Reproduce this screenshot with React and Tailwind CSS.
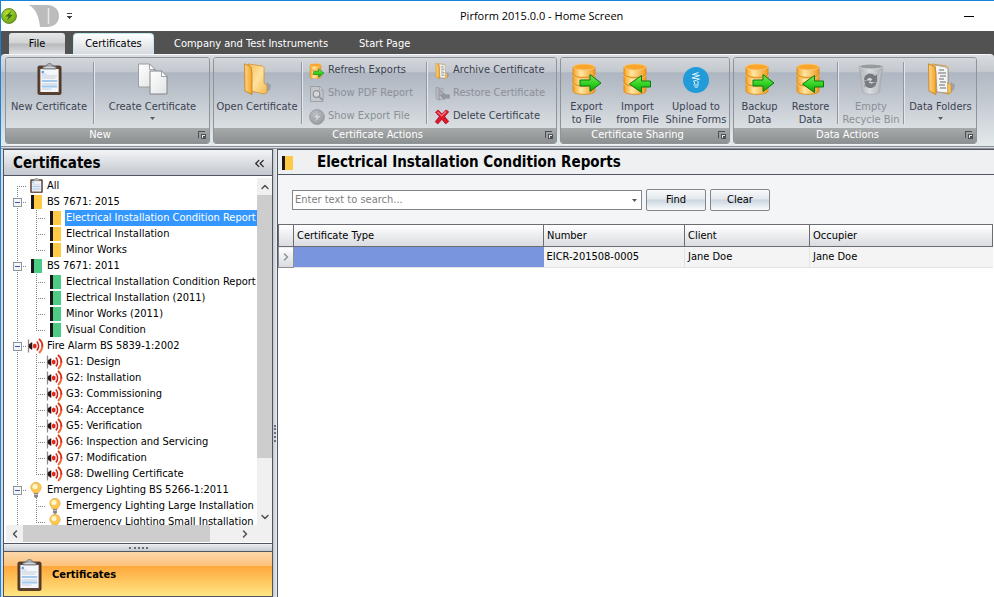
import React, { useState } from "react";
import { ChevronUp, ChevronDown, ChevronLeft, ChevronRight, ChevronsLeft } from "lucide-react";

/* ---------- icons ---------- */

const Bolt = ({ size = 16, grey }) => (
  <svg width={size} height={size} viewBox="0 0 16 16">
    <defs>
      <radialGradient id={grey ? "boltGrey" : "boltGreen"} cx="0.4" cy="0.3" r="0.8">
        <stop offset="0" stopColor={grey ? "#b9bcc0" : "#b6e22c"} />
        <stop offset="1" stopColor={grey ? "#86898d" : "#5fa014"} />
      </radialGradient>
    </defs>
    <circle cx="8" cy="8" r="7.4" fill={grey ? "url(#boltGrey)" : "url(#boltGreen)"} stroke={grey ? "#8d9094" : "#667f2a"} strokeWidth="1" />
    <path d="M11 2 3.800 8.800h3.500L5 14l7.500-7.500H8.900z" fill={grey ? "#d5d8db" : "#3c6a12"} stroke={grey ? "#7d8084" : "#a6d43e"} strokeWidth="0.400" />
  </svg>
);

const Clipboard = ({ small }) => (
  <svg width={small ? 13 : 25} height={small ? 15 : 32} viewBox="0 0 26 32" preserveAspectRatio="none" className="shrink-0">
    <rect x="1" y="3" width="24" height="28.500" rx="1.500" fill="#5f402c" stroke="#3a2a22" strokeWidth="0.800" />
    <path d="M3.500 6h19v23h-19z" fill="#f3f7fc" />
    <path d="M5 11h5M5 13h16M5 15h14M5 21h16M5 26h10" stroke="#b9c3d2" strokeWidth="0.800" />
    <path d="M5 18h16M5 23.500h16" stroke="#a4c8ec" strokeWidth="2" />
    <circle cx="6" cy="9" r="1.300" fill="#5a9be0" />
    <path d="M6 6V3.800l4-.8C10.300 1 11.500.4 13 .4s2.700.6 3 2.600l4 .8V6z" fill="#a7abb0" stroke="#5d6065" strokeWidth="0.700" />
    <path d="M8 4.300h10" stroke="#e6e8ea" strokeWidth="0.900" />
  </svg>
);

const Pages = () => (
  <svg width="32" height="32" viewBox="0 0 32 32">
    <defs>
      <linearGradient id="pageFill" x1="0" y1="0" x2="1" y2="1">
        <stop offset="0" stopColor="#ffffff" />
        <stop offset="1" stopColor="#e2e3e4" />
      </linearGradient>
    </defs>
    <path d="M1.500 1h11l5.500 5.500V24H1.500z" fill="url(#pageFill)" stroke="#9b9da0" />
    <path d="M12.500 1v5.500H18z" fill="#fff" stroke="#8b8e92" strokeWidth="0.800" />
    <path d="M13 8h11.500L30 13.500V31H13z" fill="url(#pageFill)" stroke="#828487" />
    <path d="M24.500 8v5.500H30z" fill="#fff" stroke="#8b8e92" strokeWidth="0.800" />
  </svg>
);

const Folder = ({ size = 32, papers, grey }) => {
  const id = grey ? "folderGrey" : "folderGold";
  return (
    <svg width={size} height={size} viewBox="0 0 32 32">
      <defs>
        <linearGradient id={id} x1="0" y1="0" x2="1" y2="1">
          <stop offset="0" stopColor={grey ? "#b6b9bd" : "#f9bd55"} />
          <stop offset="0.500" stopColor={grey ? "#d3d5d8" : "#ffe3a0"} />
          <stop offset="1" stopColor={grey ? "#a4a7ab" : "#f5b84e"} />
        </linearGradient>
        <linearGradient id={`${id}Flap`}>
          <stop offset="0" stopColor={grey ? "#c6c9cd" : "#ffd583"} />
          <stop offset="1" stopColor={grey ? "#a4a7ab" : "#f3a52c"} />
        </linearGradient>
      </defs>
      <path d="M23 30l6-3 1-5-4-3z" fill="#5c6068" opacity="0.300" />
      <path d="M7 1l14.500 2 1.500 1.500V20l3 2.500v7l-3 1.500-13-3z" fill={`url(#${id})`} stroke={grey ? "#909397" : "#cf8a22"} strokeWidth="0.700" />
      {papers && (
        <g>
          <path d="M10 2l11 2 2 2.500V30l-11-1z" fill="#f4f4f4" stroke="#8b8b8b" strokeWidth="0.700" />
          <path d="M14 7h5M13 10h8M15 13h6M14 16h5M15 19h6M14 22h6M15 25h6" stroke="#97999c" strokeWidth="1.500" />
          <path d="M22.500 19l3.500 3.500v7l-3 1.500z" fill="#f9c45c" stroke="#cf8a22" strokeWidth="0.600" />
        </g>
      )}
      <path d="M3.500.8L10 4l1 6v21.500L4 28z" fill={`url(#${id}Flap)`} stroke={grey ? "#909397" : "#c47c18"} strokeWidth="0.800" />
    </svg>
  );
};

const Database = ({ size = 32, dir }) => (
  <svg width={size} height={size} viewBox="0 0 32 32">
    <defs>
      <linearGradient id="dbFill">
        <stop offset="0" stopColor="#f7a11a" />
        <stop offset="0.350" stopColor="#ffe7a6" />
        <stop offset="1" stopColor="#f09a1c" />
      </linearGradient>
      <linearGradient id="arrowFill" x1="0" y1="0" x2="0" y2="1">
        <stop offset="0" stopColor="#7dea5e" />
        <stop offset="0.550" stopColor="#2fd01f" />
        <stop offset="1" stopColor="#0e9a12" />
      </linearGradient>
    </defs>
    {[20, 11.5, 3].map((y) => (
      <g key={y}>
        <path d={`M2 ${y + 1}v7c0 4.500 22 4.500 22 0v-7z`} fill="url(#dbFill)" stroke="#d98412" strokeWidth="0.800" />
        <ellipse cx="13" cy={y + 1} rx="11" ry="3" fill="#fba52a" stroke="#f3cd82" strokeWidth="0.800" />
      </g>
    ))}
    {dir === "right" ? (
      <path d="M9 17h10v-5.500L30 20l-11 8.500V23H9z" fill="url(#arrowFill)" stroke="#087a10" strokeLinejoin="round" />
    ) : (
      <path d="M28.500 18h-9v-5.500L7.500 21l12 8.500V24h9z" fill="url(#arrowFill)" stroke="#087a10" strokeLinejoin="round" />
    )}
  </svg>
);

const Lamp = () => (
  <svg width="32" height="32" viewBox="0 0 32 32">
    <circle cx="16" cy="17" r="13" fill="#219cd8" />
    <path d="M12.500 11.500l6-2M12.500 11.500l7 1M12 15l7.500-2.500M12 15l7.500 1M13 18.500l6.500-2.500M14.500 21v-2M18 21v-3M13.500 22h5.500M14.500 24h3.500" stroke="#e4f4fc" strokeWidth="1" fill="none" />
  </svg>
);

const Bin = () => (
  <svg width="32" height="32" viewBox="0 0 32 32">
    <defs>
      <linearGradient id="binFill">
        <stop offset="0" stopColor="#a6a9ad" />
        <stop offset="0.450" stopColor="#e2e4e6" />
        <stop offset="1" stopColor="#a0a3a7" />
      </linearGradient>
    </defs>
    <path d="M4 3.500h24l-3.500 26c-3 2.500-14 2.500-17 0z" fill="url(#binFill)" stroke="#a8abaf" strokeWidth="0.800" />
    <ellipse cx="16" cy="3.500" rx="12" ry="2.500" fill="#8b8e92" stroke="#d5d8db" />
    <path d="M9 17c0-6 7-9 11-4l2-1.500v7.500h-7l2.200-2.500c-2-2.500-4.700-1.500-5.200.5zM21.500 19.500c-1 6-7.500 7-11 3.500L9 24.500V17.500h6.500l-1.700 2c2 1.800 4 1 4.500 0z" fill="#686b70" />
    <path d="M7 9l4 19M25.500 8l-4 20M10 7l12 3" stroke="#d5d7da" strokeWidth="0.800" fill="none" />
  </svg>
);

const PdfSearch = () => (
  <svg width="16" height="16" viewBox="0 0 16 16">
    <path d="M1.500.5h9l3.500 3.500v11.500H1.500z" fill="#c6c9cd" stroke="#94979b" />
    <path d="M10.500.5V4H14z" fill="#dcdee0" stroke="#94979b" strokeWidth="0.700" />
    <circle cx="7.500" cy="8" r="3.300" fill="#dadcdf" stroke="#85888c" strokeWidth="1.200" />
    <path d="M10 10.500l3.500 3.500" stroke="#85888c" strokeWidth="1.700" />
  </svg>
);

const FolderPrint = () => (
  <svg width="16" height="16" viewBox="0 0 16 16">
    <path d="M2 1l3 1v12l-3-1.500zM5 2l4 .5V13l-4 1z" fill="#b9bcc0" stroke="#8e9195" strokeWidth="0.700" />
    <path d="M6 4l3 5M5.500 8l4 4" stroke="#85888c" strokeWidth="1.200" />
    <path d="M7.500 10l3-3v1.800h5v3.400h-5V14z" fill="#8a8d91" stroke="#7c7f83" strokeWidth="0.500" />
  </svg>
);

const RedCross = () => (
  <svg width="16" height="16" viewBox="0 0 16 16">
    <path d="M1.500 3.200L4.200 1l3.600 4L12 .9l2.700 1.900-4 4.700 4 4.900-3 2.500-3.900-4.500-4 4.600-2.600-2.300L5.300 7.600z" fill="#e0162b" stroke="#a80f20" strokeWidth="0.700" strokeLinejoin="round" />
    <path d="M3.500 2.800l4.200 4L12 2.500" stroke="#f98a92" fill="none" strokeWidth="1.100" />
  </svg>
);

const Book = ({ color }) => (
  <svg width="19" height="16" viewBox="0 0 19 16" shapeRendering="crispEdges" className="shrink-0">
    <path d="M4 1h3v14H4z" fill="#1b1718" />
    <path d="M7 1h8v14H7z" fill={color} />
  </svg>
);

const Siren = () => (
  <svg width="19" height="16" viewBox="0 0 19 16" className="shrink-0">
    <path d="M1.500 1.500v13" stroke="#8c8c8c" strokeWidth="1.300" />
    <path d="M2 6.500l3-2v7l-3-2z" fill="#2c1416" stroke="#2c1416" strokeWidth="0.600" />
    <ellipse cx="7.800" cy="8" rx="1.900" ry="2.600" fill="#e02a1a" />
    <path d="M9.800 3.500c2.400 2.500 2.400 6.500 0 9" stroke="#c81f1a" strokeWidth="1.500" fill="none" />
    <path d="M12 1c4.500 4 4.500 10 0 14" stroke="#f07040" strokeWidth="2" fill="none" />
    <path d="M12 1c3 2.500 3.600 5.500 3.200 8" stroke="#d8301e" strokeWidth="1.500" fill="none" />
  </svg>
);

const Bulb = () => (
  <svg width="19" height="16" viewBox="0 0 19 16" className="shrink-0">
    <path d="M9 .3a5.200 5.200 0 0 1 5.200 5.200c0 2.500-2.200 3.500-2.700 5.500h-5C6 9 3.800 8 3.800 5.500A5.200 5.200 0 0 1 9 .3z" fill="#fdc650" stroke="#e5a84a" strokeWidth="0.700" />
    <circle cx="8" cy="4.500" r="2.600" fill="#fff6cc" />
    <path d="M7 11h4v3.500L9.500 16h-1L7 14.500z" fill="#8a8583" />
    <path d="M7 12.500h4" stroke="#d3d0cd" strokeWidth="0.800" />
  </svg>
);

const Launcher = () => (
  <svg width="9" height="9" viewBox="0 0 9 9" shapeRendering="crispEdges">
    <path d="M.5 6.500v-6h6" fill="none" stroke="#4c4f55" />
    <path d="M3.500 3.500h4v4h-4z" fill="#e4e5e6" stroke="#4c4f55" />
    <path d="M5 5h2v2H5z" fill="#4c4f55" />
  </svg>
);

const Caret = () => (
  <svg width="5" height="3" viewBox="0 0 5 3">
    <path d="M0 0h5L2.500 3z" fill="#555b66" />
  </svg>
);

/* ---------- ribbon ---------- */

const LargeButton = ({ icon, lines, width, disabled, menu }) => (
  <button disabled={disabled} className={`flex flex-col items-center pt-1 leading-[13px] whitespace-nowrap ${width} ${disabled ? "text-[#8b9097]" : "text-[#3b4252]"}`}>
    <span className={`mb-1 flex h-[34px] items-center justify-center ${disabled ? "opacity-80" : ""}`}>{icon}</span>
    {lines.map((line) => (
      <span key={line}>{line}</span>
    ))}
    {menu && (
      <span className="flex h-2.5 items-center">
        <Caret />
      </span>
    )}
  </button>
);

const SmallButton = ({ icon, label, disabled }) => (
  <button disabled={disabled} className={`flex h-[23px] items-center gap-[3px] whitespace-nowrap ${disabled ? "text-[#8b9097]" : "text-[#3b4252]"}`}>
    <span className={`flex w-4 justify-center ${disabled ? "opacity-80" : ""}`}>{icon}</span>
    {label}
  </button>
);

const Separator = () => <span className="mx-px my-1 w-0.5 shrink-0 border-l border-[#9298a1] bg-[#e3e6ea]" />;

const Group = ({ title, width, children }) => (
  <section className={`flex shrink-0 flex-col overflow-hidden rounded-[3px] border border-[#8f949b] shadow-[0_1px_0_#f2f4f6] ${width}`}>
    <div className="flex h-[70px] bg-[linear-gradient(#d3d6db_0%,#c3c8cf_20%,#aeb6c2_21%,#bcc3cb_50%,#dadfe2_100%)]">{children}</div>
    <div className="flex h-[15px] items-center bg-linear-to-b from-[#a7aaab] to-[#8d9091] pr-0.5 text-white">
      <h2 className="flex-1 pr-1 text-center">{title}</h2>
      <button aria-label={`${title} options`}>
        <Launcher />
      </button>
    </div>
  </section>
);

const Ribbon = () => (
  <div className="flex gap-[3px] rounded-t-[4px] border-t border-[#f4f6f8] bg-[linear-gradient(#d9dce0_0%,#c6cbd1_18%,#b1b9c4_19%,#c3c9d0_50%,#e3eaec_100%)] px-1 pt-0.5 pb-0.5">
    <Group title="New" width="w-[205px]">
      <LargeButton icon={<Clipboard />} lines={["New Certificate"]} width="w-[86px]" />
      <Separator />
      <LargeButton icon={<Pages />} lines={["Create Certificate"]} width="w-[113px]" menu />
    </Group>
    <Group title="Certificate Actions" width="w-[344px]">
      <LargeButton icon={<Folder />} lines={["Open Certificate"]} width="w-[86px]" />
      <Separator />
      <div className="w-[121px] pt-px pl-[5px]">
        <SmallButton icon={<Database size={16} dir="right" />} label="Refresh Exports" />
        <SmallButton icon={<PdfSearch />} label="Show PDF Report" disabled />
        <SmallButton icon={<Bolt grey />} label="Show Export File" disabled />
      </div>
      <Separator />
      <div className="pt-px pl-[5px]">
        <SmallButton icon={<Folder size={16} papers />} label="Archive Certificate" />
        <SmallButton icon={<FolderPrint />} label="Restore Certificate" disabled />
        <SmallButton icon={<RedCross />} label="Delete Certificate" />
      </div>
    </Group>
    <Group title="Certificate Sharing" width="w-[170px]">
      <LargeButton icon={<Database dir="right" />} lines={["Export", "to File"]} width="w-[51px]" />
      <LargeButton icon={<Database dir="left" />} lines={["Import", "from File"]} width="w-[51px]" />
      <LargeButton icon={<Lamp />} lines={["Upload to", "Shine Forms"]} width="w-[66px]" />
    </Group>
    <Group title="Data Actions" width="w-[244px]">
      <LargeButton icon={<Database dir="right" />} lines={["Backup", "Data"]} width="w-[51px]" />
      <LargeButton icon={<Database dir="left" />} lines={["Restore", "Data"]} width="w-[51px]" />
      <Separator />
      <LargeButton icon={<Bin />} lines={["Empty", "Recycle Bin"]} width="w-[62px]" disabled />
      <Separator />
      <LargeButton icon={<Folder papers />} lines={["Data Folders"]} width="w-[69px]" menu />
    </Group>
  </div>
);

/* ---------- navigation tree ---------- */

const yellow = <Book color="#ffc845" />;
const green = <Book color="#4ccb85" />;

const tree = [
  { label: "All", icon: <span className="flex w-[19px] justify-center"><Clipboard small /></span> },
  {
    label: "BS 7671: 2015",
    icon: yellow,
    items: ["Electrical Installation Condition Report", "Electrical Installation", "Minor Works"],
  },
  {
    label: "BS 7671: 2011",
    icon: green,
    items: ["Electrical Installation Condition Report", "Electrical Installation (2011)", "Minor Works (2011)", "Visual Condition"],
  },
  {
    label: "Fire Alarm BS 5839-1:2002",
    icon: <Siren />,
    items: [
      "G1: Design",
      "G2: Installation",
      "G3: Commissioning",
      "G4: Acceptance",
      "G5: Verification",
      "G6: Inspection and Servicing",
      "G7: Modification",
      "G8: Dwelling Certificate",
    ],
  },
  {
    label: "Emergency Lighting BS 5266-1:2011",
    icon: <Bulb />,
    items: ["Emergency Lighting Large Installation", "Emergency Lighting Small Installation"],
  },
];

const Branch = ({ top = true, bottom = true, across = true, box }) => (
  <svg width="19" height="16" viewBox="0 0 19 16" className="shrink-0" shapeRendering="crispEdges">
    <g stroke="#808080" strokeDasharray="1 1">
      {top && <path d="M9.500 0v8" />}
      {bottom && <path d="M9.500 8v8" />}
      {across && <path d="M9 8.500h11" />}
    </g>
    {box && (
      <g>
        <rect x="5.500" y="4.500" width="8" height="8" fill="#f4f5f7" stroke="#8f96a3" />
        <path d="M7 8.500h5" stroke="#3c56a8" />
      </g>
    )}
  </svg>
);

const Tree = () => {
  const [selected, setSelected] = useState("1-0");
  return (
    <ul className="min-h-0 min-w-0 flex-1 overflow-hidden pt-0.5 pl-0.5 leading-4 whitespace-nowrap text-black">
      {tree.map((node, i) => (
        <li key={node.label}>
          <div className="flex h-4">
            <Branch top={i > 0} box={!!node.items} />
            {node.icon}
            <span className="px-px">{node.label}</span>
          </div>
          {node.items && (
            <ul>
              {node.items.map((item, j) => (
                <li key={item} className="flex h-4" onClick={() => setSelected(`${i}-${j}`)}>
                  <Branch across={false} />
                  <Branch bottom={j < node.items.length - 1} />
                  {node.icon}
                  <span className={`px-px ${selected === `${i}-${j}` ? "bg-[#3397ff] text-white" : ""}`}>{item}</span>
                </li>
              ))}
            </ul>
          )}
        </li>
      ))}
    </ul>
  );
};

const Navigation = () => (
  <aside className="flex w-[270px] shrink-0 flex-col border-x border-[#4f5563]">
    <div className="flex h-[27px] shrink-0 items-center justify-between border-y border-[#4f5563] bg-linear-to-b from-[#f3f4f6] to-[#c3c8ce] pt-px pr-[5px] pl-[9px]">
      <h1 className="text-[15px] font-bold text-black">Certificates</h1>
      <button aria-label="Collapse panel">
        <ChevronsLeft size={15} strokeWidth={2} className="text-[#222]" />
      </button>
    </div>

    <div className="flex min-h-0 flex-1 flex-col border-b border-[#4f5563] bg-white pb-px pl-0.5">
      <div className="flex min-h-0 flex-1">
        <Tree />
        <div className="mt-0.5 flex w-[15px] shrink-0 flex-col bg-[#f0f0f0]">
          <button aria-label="Scroll up" className="flex h-[17px] items-center justify-center">
            <ChevronUp size={12} strokeWidth={3} className="text-[#505050]" />
          </button>
          <div className="grow-[263] bg-[#cdcdcd]" />
          <div className="grow-[50]" />
          <button aria-label="Scroll down" className="flex h-[17px] items-center justify-center">
            <ChevronDown size={12} strokeWidth={3} className="text-[#505050]" />
          </button>
        </div>
      </div>
      <div className="flex h-[17px] shrink-0 bg-[#f0f0f0] pr-[19px]">
        <button aria-label="Scroll left" className="flex w-[17px] items-center justify-center">
          <ChevronLeft size={12} strokeWidth={3} className="text-[#505050]" />
        </button>
        <div className="grow-[187] bg-[#cdcdcd]" />
        <div className="grow-[26]" />
        <button aria-label="Scroll right" className="flex w-[17px] items-center justify-center">
          <ChevronRight size={12} strokeWidth={3} className="text-[#505050]" />
        </button>
      </div>
    </div>

    <div className="flex h-[7px] shrink-0 items-center justify-center bg-linear-to-b from-[#eceef0] to-[#c6cad0]">
      <span className="w-[19px] border-t-2 border-dotted border-[#6b7078]" />
    </div>
    <button className="flex h-[46px] shrink-0 items-center gap-[10px] border-y border-[#4f5563] bg-[linear-gradient(#fcd7aa_0%,#fcc27c_32%,#ffa83c_33%,#ffe684_100%)] pt-0.5 pl-[13px] font-bold text-black">
      <Clipboard />
      Certificates
    </button>
  </aside>
);

/* ---------- main area ---------- */

const PushButton = ({ children }) => (
  <button className="h-[22px] w-[60px] rounded-[2px] border border-[#82868c] bg-[linear-gradient(#f9fafb_0%,#e3e8ed_45%,#c9d5e0_50%,#fafcfd_100%)] text-black">
    {children}
  </button>
);

const columns = ["Certificate Type", "Number", "Client", "Occupier"];

const Reports = () => {
  const [query, setQuery] = useState("");
  return (
    <main className="flex min-w-0 flex-1 flex-col border-l border-[#4f5563] bg-white">
      <header className="flex h-[26px] shrink-0 items-center gap-5 border-y border-[#4f5563] bg-[#eef0f2] pt-px">
        <Book color="#ffc845" />
        <h1 className="text-[15px] font-bold whitespace-nowrap text-black">Electrical Installation Condition Reports</h1>
      </header>

      <div className="flex shrink-0 gap-1 bg-[#f4f5f7] pt-[14px] pb-[13px] pl-[14px]">
        <div className="my-px flex w-[350px] items-center border border-[#82868c] bg-white">
          <input
            aria-label="Search certificates"
            value={query}
            onChange={(e) => setQuery(e.target.value)}
            placeholder="Enter text to search..."
            className="min-w-0 flex-1 px-0.5 outline-none placeholder:text-[#808080]"
          />
          <button aria-label="Recent searches" className="flex w-[14px] justify-center">
            <Caret />
          </button>
        </div>
        <PushButton>Find</PushButton>
        <PushButton>Clear</PushButton>
      </div>

      <div className="pr-px">
        <table className="w-full table-fixed border-collapse text-left text-black">
          <colgroup>
            <col className="w-[15px]" />
            <col className="w-[250px]" />
            <col className="w-[141px]" />
            <col className="w-[125px]" />
            <col />
          </colgroup>
          <thead>
            <tr className="h-[22px] bg-linear-to-b from-white to-[#d8dadf]">
              <th className="border border-[#6b6d72]" />
              {columns.map((column) => (
                <th key={column} className="border border-[#6b6d72] px-[3px] pt-px font-normal">
                  {column}
                </th>
              ))}
            </tr>
          </thead>
          <tbody>
            <tr className="h-[21px] bg-[#f4f4f4]">
              <td className="border border-[#8c8f94] bg-linear-to-b from-white to-[#d8dadf]">
                <ChevronRight size={12} strokeWidth={3} className="mx-auto text-[#8d949e]" />
              </td>
              <td className="border-b border-[#e3e3e3] bg-[#7895dd]" />
              <td className="border-r border-b border-[#e3e3e3] px-[3px] pt-px">EICR-201508-0005</td>
              <td className="border-r border-b border-[#e3e3e3] px-[3px] pt-px">Jane Doe</td>
              <td className="border-b border-[#e3e3e3] px-[3px] pt-px">Jane Doe</td>
            </tr>
          </tbody>
        </table>
      </div>
    </main>
  );
};

const App = () => (
  <div className="flex h-screen flex-col overflow-hidden border-t border-l border-[#1883d7] bg-[#c9cdd2] font-['DejaVu_Sans_Condensed','DejaVu_Sans',sans-serif] text-[11px]">
    {/* title bar */}
    <div className="grid h-[30px] shrink-0 grid-cols-[457fr_auto_369fr] items-center bg-white">
      <div className="flex items-center">
        <Bolt />
        <svg width="32" height="24" viewBox="0 0 32 24" className="ml-3">
          <path d="M0 1h18c7 0 12 4 12 11s-5 11-12 11h-7C10 13 7 5 0 1z" fill="#bcbcbc" />
          <path d="M19.500 4v16" stroke="#e8e8e8" strokeWidth="1.500" />
        </svg>
        <svg width="5" height="7" viewBox="0 0 5 7" className="ml-[6px]" shapeRendering="crispEdges">
          <path d="M0 .5h5" stroke="#444" strokeWidth="1" />
          <path d="M0 3h5L2.500 6z" fill="#444" />
        </svg>
      </div>
      <p className="font-['Open_Sans','Noto_Sans',sans-serif] text-[11px] text-black">Pirform 2015.0.0 - Home Screen</p>
      <button aria-label="Minimize" className="mr-5 justify-self-end">
        <span className="block w-2.5 border-t border-black" />
      </button>
    </div>

    {/* ribbon tabs */}
    <nav className="flex h-[23px] shrink-0 items-end bg-[#525252] pl-2 text-white">
      <button className="h-[21px] w-14 rounded-t-[3px] bg-[linear-gradient(#e6e7e9_0%,#d0d2d4_48%,#b6b9bc_52%,#dcdee0_100%)] pt-px text-black">File</button>
      <button className="ml-2 h-[21px] w-[81px] rounded-t-[4px] border border-b-0 border-[#bfeaf2] bg-linear-to-b from-white to-[#d6dadf] text-black">Certificates</button>
      <button className="ml-5 h-[21px] pt-px">Company and Test Instruments</button>
      <button className="ml-[31px] h-[21px] pt-px">Start Page</button>
    </nav>
    <div className="shrink-0 bg-[#525252]">
      <Ribbon />
    </div>
    <div className="h-[3px] shrink-0 border-y border-[#8d9096] bg-[#d8dbdf]" />

    <div className="flex min-h-0 flex-1 bg-[#d8dbdf] pl-0.5">
      <Navigation />
      <div className="flex w-1 shrink-0 items-center justify-center bg-linear-to-r from-[#c3c7cc] to-[#eceef0]">
        <span className="mt-[120px] h-[17px] border-l-2 border-dotted border-[#6b7078]" />
      </div>
      <Reports />
    </div>
  </div>
);

export default App;
